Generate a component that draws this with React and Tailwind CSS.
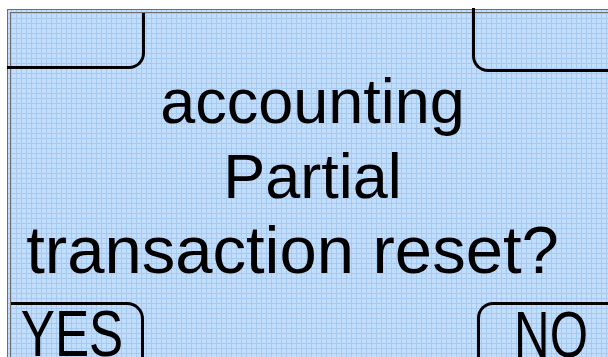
const gridBg =
    "bg-[#c2defc] bg-[image:linear-gradient(to_right,#a6c9f0_1px,transparent_1px),linear-gradient(to_bottom,#a6c9f0_1px,transparent_1px)] bg-size-[5px_5px]"

const App = () => {
    return (
        <div className="w-[608px] h-[357px] overflow-hidden bg-white" style={{ fontFamily: '"Liberation Sans", Arial, sans-serif' }}>
            <div className={`ml-[7px] mt-[9px] w-[601px] h-[400px] border-t-4 border-l-4 border-double border-[#6e6e6e] flex flex-col ${gridBg}`}>
                {/* top soft keys */}
                <div className="flex justify-between items-start h-[59px]">
                    <div className="-ml-[4px] w-[138px] h-[56px] border-r-[3px] border-b-[3px] border-black rounded-br-[16px]" />
                    <div className="-mt-[5px] w-[136px] h-[64px] border-l-[3px] border-b-[3px] border-black rounded-bl-[16px]" />
                </div>

                {/* message */}
                <div className="flex flex-col items-center text-black text-[63px] leading-[75px] h-[230px] -mt-[8px] pl-[6px]">
                    <p>accounting</p>
                    <p>Partial</p>
                    <p className="text-[67px] mr-[40px] -mt-[2px]">transaction reset?</p>
                </div>

                {/* bottom soft keys */}
                <div className="flex justify-between items-start mt-[8px]">
                    <div className="w-[133px] h-[80px] border-t-[3px] border-r-[3px] border-black rounded-tr-[17px] flex justify-center pr-[8px]">
                        <span className="text-[64px] leading-none -mt-[3px] scale-x-[0.8] origin-center">YES</span>
                    </div>
                    <div className="w-[131px] h-[80px] border-t-[3px] border-l-[3px] border-black rounded-tl-[16px] flex justify-center pl-[14px]">
                        <span className="text-[64px] leading-none -mt-[2px] scale-x-[0.77] origin-center">NO</span>
                    </div>
                </div>
            </div>
        </div>
    )
}

export default App
